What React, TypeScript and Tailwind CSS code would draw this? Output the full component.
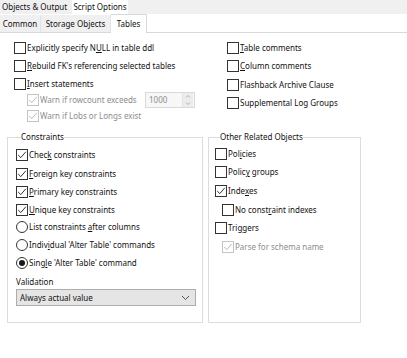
import React from "react";

type BoxProps = { checked?: boolean; disabled?: boolean };

function Box({ checked, disabled }: BoxProps) {
  const border = disabled ? "border-[#c4c4c4]" : "border-[#333333]";
  return (
    <span className={`w-[12px] h-[12px] border ${border} bg-white flex items-center justify-center shrink-0`}>
      {checked && (
        <svg width="10" height="10" viewBox="0 0 10 10">
          <path d="M1.2 5 L3.8 7.6 L8.8 1.8" fill="none" stroke={disabled ? "#b9b9b9" : "#333333"} strokeWidth="1" />
        </svg>
      )}
    </span>
  );
}

function Radio({ checked }: { checked?: boolean }) {
  return (
    <span className="w-[12px] h-[12px] rounded-full border border-[#333333] bg-white flex items-center justify-center shrink-0">
      {checked && <span className="w-[6px] h-[6px] rounded-full bg-[#1a1a1a]" />}
    </span>
  );
}

// label with one underlined access-key letter
function Label({ text, k, disabled }: { text: string; k?: number; disabled?: boolean }) {
  const color = disabled ? "text-[#8d8d8d]" : "text-[#111111]";
  if (k === undefined) return <span className={`${color} whitespace-nowrap`}>{text}</span>;
  return (
    <span className={`${color} whitespace-nowrap`}>
      {text.slice(0, k)}
      <span className="underline underline-offset-1">{text[k]}</span>
      {text.slice(k + 1)}
    </span>
  );
}

function Check({ text, k, checked, disabled, h = "h-[18px]" }: { text: string; k?: number; checked?: boolean; disabled?: boolean; h?: string }) {
  return (
    <div className={`flex items-center gap-[1px] ${h}`}>
      <Box checked={checked} disabled={disabled} />
      <Label text={text} k={k} disabled={disabled} />
    </div>
  );
}

function RadioRow({ text, k, checked, h = "h-[18px]" }: { text: string; k?: number; checked?: boolean; h?: string }) {
  return (
    <div className={`flex items-center gap-[1px] ${h}`}>
      <Radio checked={checked} />
      <Label text={text} k={k} />
    </div>
  );
}

export default function App() {
  return (
    <div
      className="w-[407px] h-[358px] bg-white text-[8px] leading-none overflow-hidden text-[#111111]"
      style={{ fontFamily: '"Noto Sans", "Open Sans", sans-serif' }}
    >
      {/* outer tab strip */}
      <div className="h-[14px] bg-[#f0f0f0] flex">
        <div className="w-[72px] pl-[2px] h-[13px] flex items-center">Objects &amp; Output</div>
        <div className="w-[56px] h-[14px] bg-white flex items-center justify-center">Script Options</div>
      </div>

      {/* inner tab strip */}
      <div className="h-[19px] flex items-end border-b border-[#d9d9d9]">
        <div className="w-[41px] h-[17px] bg-[#f0f0f0] border-r border-[#e3e3e3] flex items-center justify-center">Common</div>
        <div className="w-[70px] h-[17px] bg-[#f0f0f0] border-r border-[#e3e3e3] flex items-center justify-center">Storage Objects</div>
        <div className="w-[36px] h-[19px] bg-white border-r border-t border-[#d9d9d9] flex items-center justify-center -mb-px">Tables</div>
      </div>

      {/* top options */}
      <div className="flex pl-[14px] pt-[6px]">
        <div className="w-[213px] flex flex-col">
          <Check text="Explicitly specify NULL in table ddl" k={20} />
          <Check text="Rebuild FK's referencing selected tables" k={0} />
          <Check text="Insert statements" k={0} h="h-[17px]" />
          <div className="pl-[13px] flex items-center h-[16px]">
            <Check text="Warn if rowcount exceeds" disabled checked h="h-[16px]" />
            <div className="ml-[auto] mr-[32px] w-[50px] h-[16px] border border-[#d9d9d9] bg-[#f7f7f7] flex items-center">
              <span className="pl-[3px] text-[#8d8d8d] flex-1">1000</span>
              <span className="w-[11px] h-[14px] mr-[1px] flex flex-col border-l border-[#e3e3e3] bg-[#ececec]">
                <svg width="10" height="7" viewBox="0 0 10 7"><path d="M3 4.5 L5 2.5 L7 4.5" fill="none" stroke="#b0b0b0" /></svg>
                <svg width="10" height="7" viewBox="0 0 10 7"><path d="M3 2.5 L5 4.5 L7 2.5" fill="none" stroke="#b0b0b0" /></svg>
              </span>
            </div>
          </div>
          <div className="pl-[13px]">
            <Check text="Warn if Lobs or Longs exist" disabled checked h="h-[16px]" />
          </div>
        </div>
        <div className="flex flex-col">
          <Check text="Table comments" k={0} />
          <Check text="Column comments" k={0} />
          <Check text="Flashback Archive Clause" h="h-[19px]" />
          <Check text="Supplemental Log Groups" />
        </div>
      </div>

      {/* group boxes */}
      <div className="flex pl-[7px] pt-[7px] gap-[5px]">
        <fieldset className="w-[195px] h-[192px] border border-[#dcdcdc] pl-[8px] pr-[6px]">
          <legend className="ml-[5px] leading-[12px]">Constraints</legend>
          <div className="flex flex-col pt-[2px]">
            <Check text="Check constraints" k={4} checked h="h-[19px]" />
            <Check text="Foreign key constraints" k={0} checked h="h-[19px]" />
            <Check text="Primary key constraints" k={0} checked h="h-[18px]" />
            <Check text="Unique key constraints" k={0} checked h="h-[17px]" />
            <RadioRow text="List constraints after columns" k={17} h="h-[17px]" />
            <RadioRow text="Individual 'Alter Table' commands" k={5} h="h-[20px]" />
            <RadioRow text="Single 'Alter Table' command" k={4} checked h="h-[16px]" />
            <div className="mt-[4px] h-[14px] flex items-center">Validation</div>
            <div className="w-[180px] h-[17px] bg-[#e5e5e5] border border-[#adadad] flex items-center pl-[3px] pr-[5px]">
              <span className="flex-1">Always actual value</span>
              <svg width="9" height="6" viewBox="0 0 9 6"><path d="M1 1 L4.5 4.5 L8 1" fill="none" stroke="#555" /></svg>
            </div>
          </div>
        </fieldset>
        <fieldset className="w-[153px] h-[192px] border border-[#dcdcdc] pl-[6px]">
          <legend className="ml-[5px] leading-[12px]">Other Related Objects</legend>
          <div className="flex flex-col pt-[2px]">
            <Check text="Policies" k={3} h="h-[17px]" />
            <Check text="Policy groups" k={5} h="h-[20px]" />
            <Check text="Indexes" k={4} checked h="h-[18px]" />
            <div className="pl-[7px]">
              <Check text="No constraint indexes" k={8} h="h-[19px]" />
            </div>
            <Check text="Triggers" k={3} h="h-[18px]" />
            <div className="pl-[7px]">
              <Check text="Parse for schema name" disabled checked h="h-[20px]" />
            </div>
          </div>
        </fieldset>
      </div>
    </div>
  );
}
